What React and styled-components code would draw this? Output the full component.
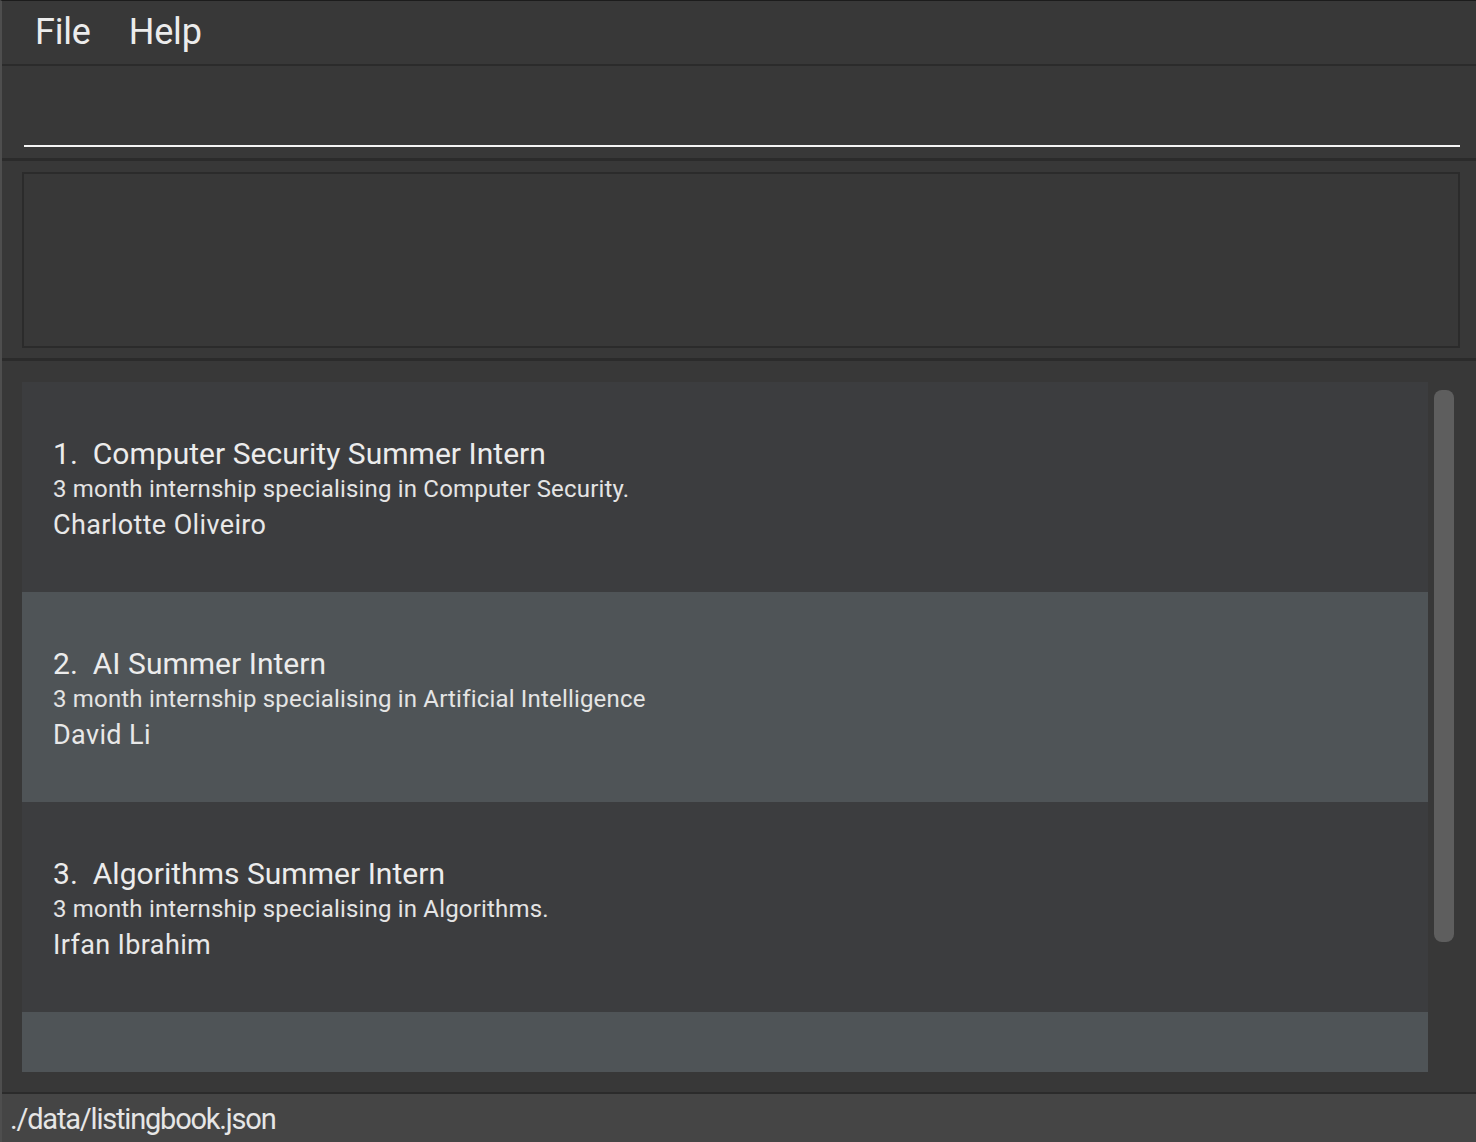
import React from "react";
import styled, { createGlobalStyle } from "styled-components";

const Global = createGlobalStyle`
  html, body { margin: 0; padding: 0; background: #383838; }
  body { font-family: Roboto, "Liberation Sans", sans-serif; }
  * { box-sizing: border-box; }
`;

const Window = styled.div`
  width: 1476px;
  height: 1142px;
  display: flex;
  flex-direction: column;
  background: #383838;
  border-left: 2px solid #4e4e4e;
  border-top: 1px solid #1c1c1c;
  overflow: hidden;
  color: #e6e6e6;
`;

const MenuBar = styled.div`
  height: 65px;
  flex: none;
  display: flex;
  align-items: center;
  gap: 38px;
  padding-left: 33px;
  padding-bottom: 1px;
  border-bottom: 2px solid #2b2b2b;
`;

const MenuItem = styled.span`
  font-size: 36px;
  letter-spacing: -0.2px;
  color: #ececec;
`;

const CommandArea = styled.div`
  height: 92px;
  flex: none;
  padding: 0 16px 11px 22px;
  display: flex;
  align-items: flex-end;
`;

const CommandInput = styled.div`
  width: 100%;
  height: 2px;
  background: #f4f4f4;
`;

const Separator = styled.div`
  height: 3px;
  flex: none;
  background: #2b2b2b;
`;

const ResultArea = styled.div`
  flex: none;
  padding: 11px 16px 10px 20px;
`;

const ResultBox = styled.div`
  height: 176px;
  border: 2px solid #2b2b2b;
  background: #383838;
`;

const ListArea = styled.div`
  flex: 1;
  display: flex;
  padding: 21px 0 20px 20px;
  min-height: 0;
`;

const Viewport = styled.div`
  width: 1406px;
  height: 690px;
  overflow: hidden;
  display: flex;
  flex-direction: column;
`;

const Card = styled.div`
  flex: none;
  height: 210px;
  padding: 54px 0 0 31px;
  background: ${(p) => (p.$alt ? "#4f5457" : "#3c3d3f")};
  display: flex;
  flex-direction: column;
`;

const Title = styled.div`
  font-size: 30px;
  line-height: 36px;
  letter-spacing: 0.03px;
  white-space: pre;
  color: #ececec;
`;

const Desc = styled.div`
  font-size: 24px;
  line-height: 35px;
  letter-spacing: 0.18px;
  color: #e4e4e4;
`;

const Name = styled.div`
  font-size: 27px;
  line-height: 36px;
  letter-spacing: 0.37px;
  color: #e8e8e8;
`;

const ScrollTrack = styled.div`
  width: 30px;
  padding: 8px 4px 0 6px;
`;

const ScrollThumb = styled.div`
  width: 20px;
  height: 552px;
  border-radius: 8px;
  background: #5e5e5e;
`;

const StatusBar = styled.div`
  height: 50px;
  flex: none;
  background: #454545;
  border-top: 2px solid #2b2b2b;
  padding: 2px 0 0 8px;
  display: flex;
  align-items: center;
  font-size: 29px;
  letter-spacing: -1.2px;
  color: #e6e6e6;
  white-space: nowrap;
`;

const listings = [
  {
    title: "Computer Security Summer Intern",
    desc: "3 month internship specialising in Computer Security.",
    name: "Charlotte Oliveiro",
  },
  {
    title: "AI Summer Intern",
    desc: "3 month internship specialising in Artificial Intelligence",
    name: "David Li",
  },
  {
    title: "Algorithms Summer Intern",
    desc: "3 month internship specialising in Algorithms.",
    name: "Irfan Ibrahim",
  },
  {
    title: "Full Stack Summer Intern",
    desc: "3 month internship specialising in Full Stack Development.",
    name: "Bernice Yu",
  },
];

export default function App() {
  return (
    <>
      <Global />
      <Window>
        <MenuBar>
          <MenuItem>File</MenuItem>
          <MenuItem>Help</MenuItem>
        </MenuBar>
        <CommandArea>
          <CommandInput />
        </CommandArea>
        <Separator />
        <ResultArea>
          <ResultBox />
        </ResultArea>
        <Separator />
        <ListArea>
          <Viewport>
            {listings.map((l, i) => (
              <Card key={i} $alt={i % 2 === 1}>
                <Title>{`${i + 1}.  ${l.title}`}</Title>
                <Desc>{l.desc}</Desc>
                <Name>{l.name}</Name>
              </Card>
            ))}
          </Viewport>
          <ScrollTrack>
            <ScrollThumb />
          </ScrollTrack>
        </ListArea>
        <StatusBar>./data/listingbook.json</StatusBar>
      </Window>
    </>
  );
}
